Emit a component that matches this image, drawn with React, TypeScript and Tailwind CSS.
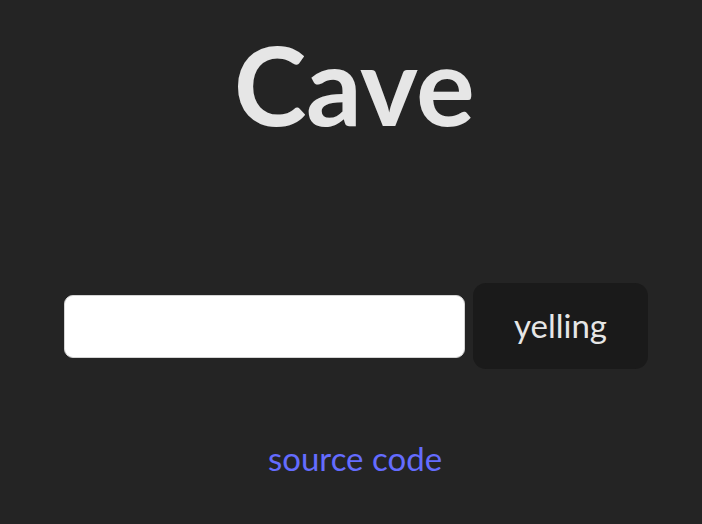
export default function App() {
  return (
    <div className="w-[702px] h-[524px] bg-[#242424] flex flex-col items-center font-['Lato','Noto_Sans',sans-serif]">
      <h1 className="mt-[18px] ml-[6px] text-[110px] leading-[130px] font-bold text-[#e6e6e6] tracking-[-0.5px]">Cave</h1>
      <div className="mt-[135px] ml-[10px] flex items-center gap-2">
        <input
          type="text"
          className="w-[401px] h-[63px] rounded-[9px] bg-white border border-[#d4d4d4] outline-none px-3 text-[24px] text-black"
        />
        <button className="w-[175px] h-[86px] rounded-[13px] bg-[#1a1a1a] text-[#e6e6e6] text-[33px] font-normal">
          yelling
        </button>
      </div>
      <a href="#" className="mt-[69px] ml-[8px] text-[33px] leading-[40px] text-[#646cff]">
        source code
      </a>
    </div>
  )
}
